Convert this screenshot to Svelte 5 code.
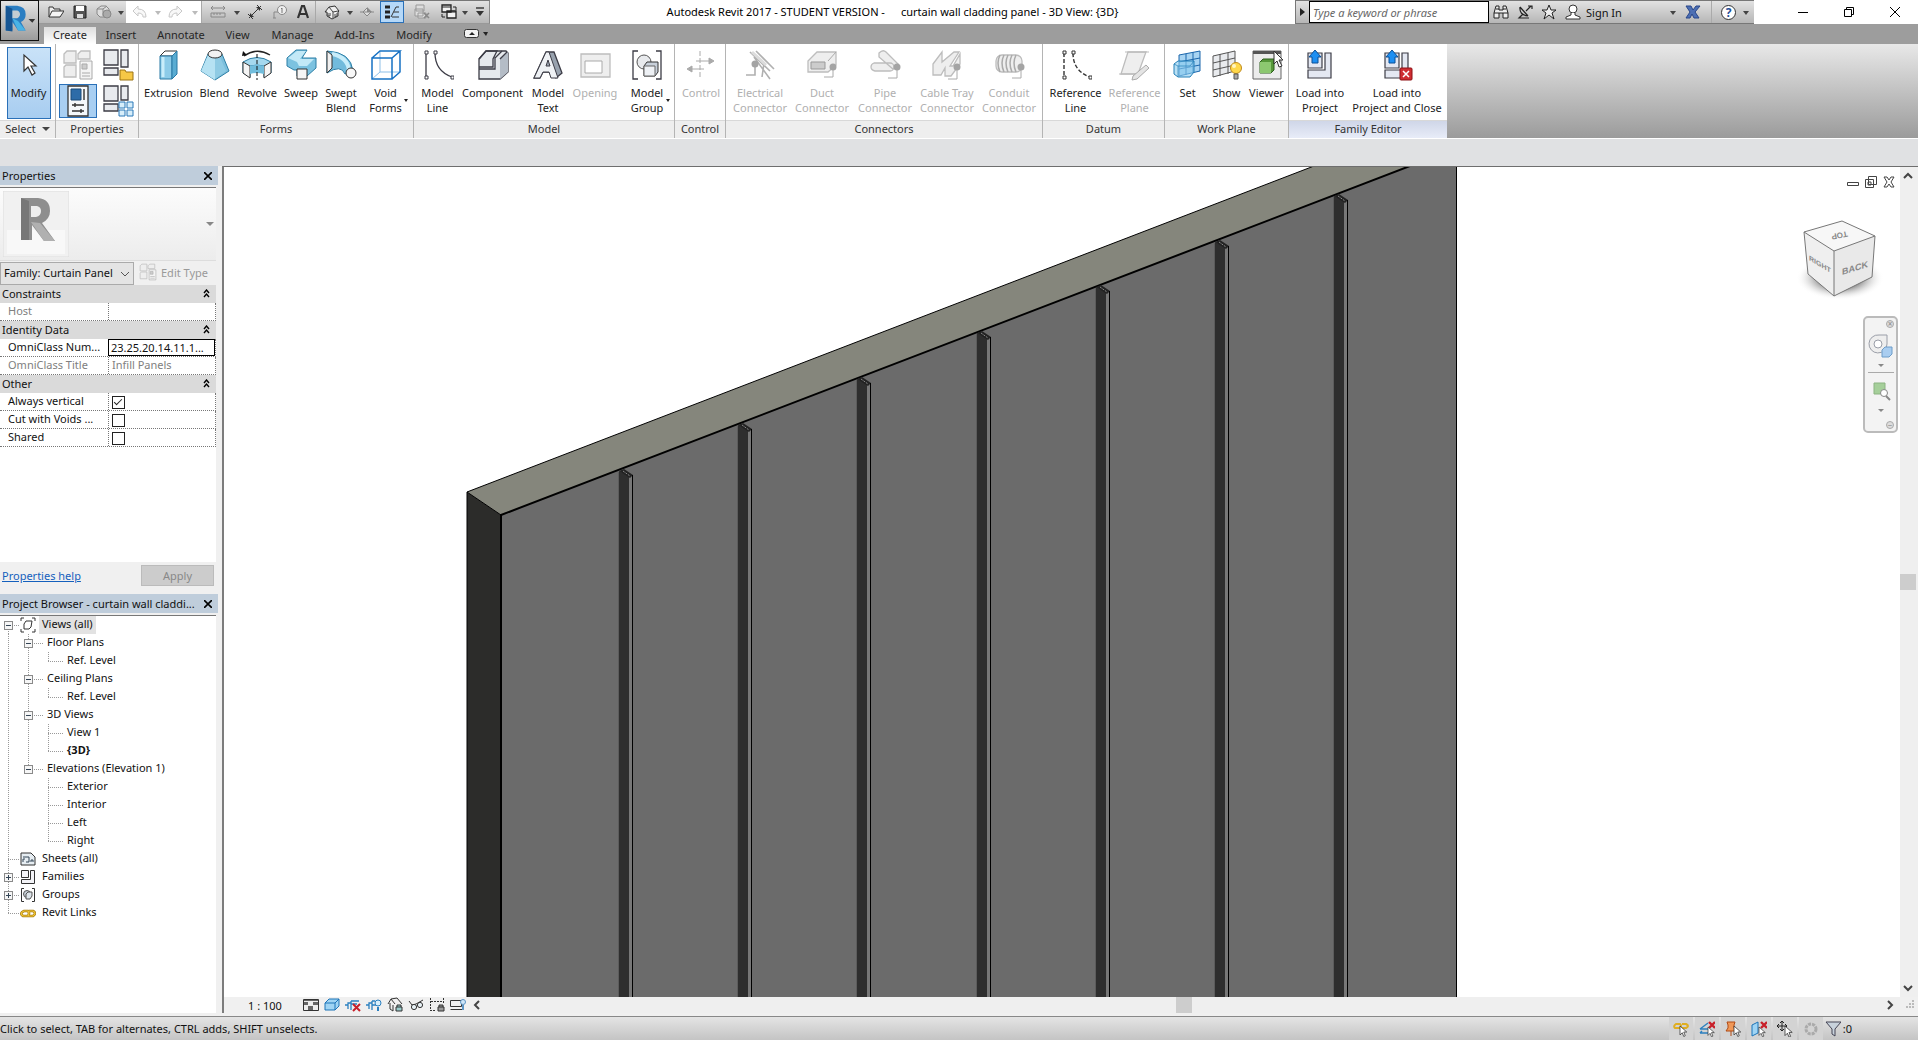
<script>
	/**
	 * Family editor window: quick access bar, ribbon, docked palettes,
	 * 3D view and status bar.
	 */
	const tabs = [
		{ label: 'Create', w: 52 },
		{ label: 'Insert', w: 50 },
		{ label: 'Annotate', w: 70 },
		{ label: 'View', w: 43 },
		{ label: 'Manage', w: 67 },
		{ label: 'Add-Ins', w: 57 },
		{ label: 'Modify', w: 62 }
	];

	const panels = [
		{
			title: 'Forms', w: 275,
			tools: [
				{ label: 'Extrusion', icon: 'extrusion', w: 52 },
				{ label: 'Blend', icon: 'blend', w: 40 },
				{ label: 'Revolve', icon: 'revolve', w: 45 },
				{ label: 'Sweep', icon: 'sweep', w: 43 },
				{ label: 'Swept\nBlend', icon: 'sweptBlend', w: 37 },
				{ label: 'Void\nForms', icon: 'voidForms', w: 52, menu: true }
			]
		},
		{
			title: 'Model', w: 261,
			tools: [
				{ label: 'Model\nLine', icon: 'modelLine', w: 43 },
				{ label: 'Component', icon: 'component', w: 67 },
				{ label: 'Model\nText', icon: 'modelText', w: 44 },
				{ label: 'Opening', icon: 'opening', w: 50, off: true },
				{ label: 'Model\nGroup', icon: 'modelGroup', w: 54, menu: true }
			]
		},
		{
			title: 'Control', w: 51,
			tools: [{ label: 'Control', icon: 'control', w: 48, off: true }]
		},
		{
			title: 'Connectors', w: 317,
			tools: [
				{ label: 'Electrical\nConnector', icon: 'electrical', w: 62, off: true },
				{ label: 'Duct\nConnector', icon: 'duct', w: 62, off: true },
				{ label: 'Pipe\nConnector', icon: 'pipe', w: 64, off: true },
				{ label: 'Cable Tray\nConnector', icon: 'cableTray', w: 60, off: true },
				{ label: 'Conduit\nConnector', icon: 'conduit', w: 64, off: true }
			]
		},
		{
			title: 'Datum', w: 122,
			tools: [
				{ label: 'Reference\nLine', icon: 'refLine', w: 60 },
				{ label: 'Reference\nPlane', icon: 'refPlane', w: 58, off: true }
			]
		},
		{
			title: 'Work Plane', w: 124,
			tools: [
				{ label: 'Set', icon: 'set', w: 38 },
				{ label: 'Show', icon: 'show', w: 40 },
				{ label: 'Viewer', icon: 'viewer', w: 40 }
			]
		},
		{
			title: 'Family Editor', w: 158, tinted: true,
			tools: [
				{ label: 'Load into\nProject', icon: 'load', w: 56 },
				{ label: 'Load into\nProject and Close', icon: 'loadClose', w: 98 }
			]
		}
	];

	const quick = [
		{ icon: 'open', name: 'Open', w: 24 },
		{ icon: 'save', name: 'Save', w: 24 },
		{ icon: 'sync', name: 'Synchronize', w: 24 },
		{ icon: 'caret', name: 'Synchronize options', w: 10 },
		{ icon: 'undo', name: 'Undo', w: 28, pale: true },
		{ icon: 'caretOff', name: 'Undo history', w: 8, pale: true },
		{ icon: 'redo', name: 'Redo', w: 26, pale: true },
		{ icon: 'caretOff', name: 'Redo history', w: 13, pale: true },
		{ icon: 'measure', name: 'Measure', w: 32, sep: true },
		{ icon: 'caret', name: 'Measure options', w: 8 },
		{ icon: 'aligned', name: 'Aligned dimension', w: 28 },
		{ icon: 'tag', name: 'Tag by category', w: 22 },
		{ icon: 'text', name: 'Text', w: 24 },
		{ icon: 'home', name: 'Default 3D view', w: 32, sep: true },
		{ icon: 'caret', name: '3D view options', w: 6 },
		{ icon: 'section', name: 'Section', w: 27 },
		{ icon: 'thin', name: 'Thin lines', w: 24, on: true },
		{ icon: 'closeHidden', name: 'Close hidden windows', w: 35 },
		{ icon: 'switch', name: 'Switch windows', w: 20 },
		{ icon: 'caret', name: 'Window list', w: 12 },
		{ icon: 'customize', name: 'Customize', w: 18 }
	];

	const tree = [
		{ label: 'Views (all)', depth: 0, box: '-', icon: 'views', selected: true },
		{ label: 'Floor Plans', depth: 1, box: '-' },
		{ label: 'Ref. Level', depth: 2, last: true },
		{ label: 'Ceiling Plans', depth: 1, box: '-' },
		{ label: 'Ref. Level', depth: 2, last: true },
		{ label: '3D Views', depth: 1, box: '-' },
		{ label: 'View 1', depth: 2 },
		{ label: '{3D}', depth: 2, last: true, bold: true },
		{ label: 'Elevations (Elevation 1)', depth: 1, box: '-', last: true },
		{ label: 'Exterior', depth: 2 },
		{ label: 'Interior', depth: 2 },
		{ label: 'Left', depth: 2 },
		{ label: 'Right', depth: 2, last: true },
		{ label: 'Sheets (all)', depth: 0, icon: 'sheets' },
		{ label: 'Families', depth: 0, box: '+', icon: 'families' },
		{ label: 'Groups', depth: 0, box: '+', icon: 'groups' },
		{ label: 'Revit Links', depth: 0, icon: 'links', last: true }
	];
	const lastBranch = tree.findIndex((n) => n.depth === 1 && n.last);

	// dotted connector lines left of a tree row
	function guides(node, i) {
		let d = `M8.5 ${i === 0 ? 9 : 0}V${i === tree.length - 1 ? 9 : 18}`;
		if (i > 0 && i <= lastBranch) d += `M28.5 0V${i === lastBranch ? 9 : 18}`;
		if (node.depth === 0) d += 'M8 9.5H20';
		if (node.depth === 1) d += 'M28 9.5H43';
		if (node.depth === 2) d += `M48.5 0V${node.last ? 9 : 18}M48 9.5H63`;
		return d;
	}

	const viewTools = ['detail', 'style', 'sunPath', 'shadows', 'crop', 'glasses', 'constraints', 'analytical'];
	const statusTools = ['selLinks', 'selUnderlay', 'selPinned', 'selFace', 'drag', 'gear'];

	const ribs = [0, 1, 2, 3, 4, 5, 6].map((n) => ({ x: Math.round(395 + n * 119.17), y: Math.round(304 - n * 45.9) }));

	const dark = 'stroke="#3c3c46" stroke-width="1.3"';
	const gray = 'fill="#eee" stroke="#bdbdbd" stroke-width="1.3"';
	const arrowCursor = '<path d="M0 0v12l3-3 2 5 2-1-2-5h4z" fill="#fff" stroke="#333"/>';
	const redX = '<path d="m10 1 6 6m0-6-6 6" stroke="#c8202a" stroke-width="2.4"/>';

	const big = {
		modify: '<path d="M11 6v16l4-4 4 8 3-2-4-7h5z" fill="#fff" stroke="#333" stroke-width="1.2"/>',
		extrusion: '<path d="m7 7 5-5h12l-5 5z" fill="#fff" stroke="#333"/><path d="M7 7h12v23H7z" fill="#8ccbe8" stroke="#2878a4"/><path d="m19 7 5-5v23l-5 5z" fill="#5aacd2" stroke="#2878a4"/><path d="M10 8v20" stroke="#c9edfa" stroke-width="3"/>',
		blend: '<path d="M9 5 2 22l14 9 14-9L23 5z" fill="#7dbfdc" stroke="#2d7fa6"/><path d="m9 6-7 16 14 9V9z" fill="#b6e2f3"/><path d="m16 9 5-1 6 14-11 8z" fill="#8fcbe4"/><ellipse cx="16" cy="5" rx="7" ry="4" fill="#f2f2f2" stroke="#333"/>',
		revolve: '<path d="M3 7Q16-2 29 6" fill="none" stroke="#222" stroke-width="1.4"/><path d="m1 7 1-5 4 4z" fill="#111"/><path d="M2 13q14-9 28 0v11l-7 4V17l-7-1-7 1v11l-7-4z" fill="#a5d8ee" stroke="#2d7fa6"/><path d="m2 13 7 4v12l-7-5zm28 0-7 4v12l7-5z" fill="#f5f5f5" stroke="#333"/><path d="M9 17q7-2 14 0v8q-7-2-14 0z" fill="#72bddc"/><path d="M16 5v26" stroke="#111" stroke-dasharray="4 2"/>',
		sweep: '<path d="m2 9 9-8h11l-5 8h14v10l-9 8H12v-6h-3l-7-4z" fill="#7cc2e0" stroke="#2d7fa6"/><path d="m3 9 9-7h9l-6 8h14l-7 7h-8L12 13z" fill="#c3e9f7"/><path d="M12 20h10v10H12z" fill="#f6f6f6" stroke="#333"/>',
		sweptBlend: '<path d="M2 2q24 1 26 20l-8 3Q16 15 2 24z" fill="#72bbdc" stroke="#2d7fa6"/><path d="M7 5q16 3 17 17" fill="none" stroke="#c8edfa" stroke-width="4"/><path d="M2 2v22l5-5V6z" fill="#f0f0f0" stroke="#333"/><circle cx="26" cy="24" r="5" fill="#f8f8f8" stroke="#333"/>',
		voidForms: '<path d="M10 2v21h20M10 23l-8 7" fill="none" stroke="#8dbfe8"/><path d="M2 9h20v21H2zm0 0 8-7h20l-8 7m8-7v21l-8 7" fill="none" stroke="#1671c4" stroke-width="1.5"/>',
		modelLine: `<g fill="#fff" ${dark}><path d="M4 4v24M13 4q0 18 17 24" fill="none"/><path d="M3 2h3v3H3zm0 25h3v3H3zm9-25h3v3h-3zm17 25h3v3h-3z" stroke-width="1"/></g>`,
		component: `<path d="m2 10 7-8h20l2 2v19l-8 7H2z" fill="#e6e9ed" ${dark}/><path d="m23 9 8-6v20l-8 7z" fill="#b4bcc6"/><path d="m2 10 7-8h11l-4 8v8H2m0 2h16V9l7-7M23 10l7-7" fill="none" ${dark}/>`,
		modelText: `<path d="m2 29 12-26h8l8 21-6 5-2-6H11l-3 6z" fill="#98a2ae" ${dark}/><path d="M2 29 14 3h3l9 26h-7l-2-6h-6l-3 6zm12-12h4l-2-6z" fill="#eef1f4" stroke="#3c3c46"/>`,
		opening: `<path d="M2 5h29v23H2z" ${gray}/><path d="M6 12h17v12H6z" fill="#fff" stroke="#aaa"/>`,
		modelGroup: `<path d="M7 2H2v28h5M25 2h5v28h-5" fill="none" ${dark}/><circle cx="13" cy="13" r="7" fill="#e8eaed" stroke="#555"/><path d="m13 17 3-4h11v10l-3 4H13z" fill="#c8d0da" stroke="#333"/><path d="M13 17h11v10H13z" fill="#eef1f5" stroke="#666"/>`,
		control: '<g stroke="#aaa" fill="#aaa"><path d="M15 2v28" stroke-dasharray="5 2"/><path d="M11 12h16M4 20h15" fill="none"/><path d="m24 9 5 3-5 3zM7 17l-5 3 5 3z"/></g>',
		electrical: '<path d="m6 3 20 19M12 2l18 18M10 8l16 22M20 14l-2 14M2 26h9V16" stroke="#b0b0b0" stroke-width="1.6" fill="none"/><circle cx="11" cy="15" r="3.5" fill="#a4a4a4"/><path d="m8 3 14 13" stroke="#dcdcdc" stroke-width="3"/>',
		duct: `<path d="m2 12 9-9h19v13l-8 7H2z" ${gray}/><path d="M5 13h14v7H5z" fill="#ccc" stroke="#999"/><path d="m22 12 8-9M18 28h9V19" fill="none" stroke="#aaa"/><circle cx="27" cy="18" r="3.5" fill="#a4a4a4"/>`,
		pipe: `<path d="M5 14h16a4 4 0 0 1 0 8H6q-4-1-4-4t3-4zM10 4q4-4 7-1l12 12-5 5L10 8z" ${gray}/><path d="M19 29h9V18" fill="none" stroke="#aaa"/><circle cx="28" cy="18" r="3.5" fill="#a4a4a4"/>`,
		cableTray: `<path d="m2 15 9-12v10L23 3h5l-9 14h3l7-12v10l-9 12h-6v-8l-4 7H2z" ${gray}/><path d="M17 30h9V18" fill="none" stroke="#aaa"/><circle cx="26" cy="18" r="3.5" fill="#a4a4a4"/>`,
		conduit: `<rect x="3" y="6" width="26" height="17" rx="6" ${gray}/><path d="M7 6q-4 8 0 17m4-17q-4 8 0 17m4-17q-4 8 0 17m4-17q-4 8 0 17m4-17q-4 8 0 17" fill="none" stroke="#aaa" stroke-width="1.5"/><path d="M19 29h9V18" fill="none" stroke="#aaa"/><circle cx="28" cy="18" r="3.5" fill="#a4a4a4"/>`,
		refLine: '<g fill="#fff" stroke="#333" stroke-width="1.4"><path d="M4 4v24M13 4q0 18 17 24" fill="none" stroke-dasharray="4 2"/><path d="M3 2h3v3H3zm0 25h3v3H3zm9-25h3v3h-3zm17 25h3v3h-3z" stroke-width="1"/></g>',
		refPlane: `<path d="M9 3h18l-8 22H2z" ${gray}/><path d="M6 3h24M0 25h22" stroke="#bbb"/><path d="m14 27 13-11 3 3-12 11-5 1z" fill="#e4e4e4" stroke="#aaa"/>`,
		set: '<path d="m7 6 21-4v20L7 27z" fill="#a8d4f2" stroke="#1b66ac"/><path d="M14 5v21m7-23v21M7 13l21-4M7 20l21-4" stroke="#1b66ac"/><path d="m2 15 4-3h16v11l-4 5H6l-4-3z" fill="#8acbee" fill-opacity=".6" stroke="#2580b8"/><path d="m2 15 4 2v11m0-11h12l4-5" fill="none" stroke="#2580b8" stroke-opacity=".7"/>',
		show: '<path d="m2 7 22-5v20L2 28z" fill="#e9ebee" stroke="#555"/><path d="M9 5v22m8-23v21M2 14l22-5M2 21l22-5" stroke="#555"/><circle cx="25" cy="19" r="5.5" fill="#ffd84a" stroke="#c08a1c"/><path d="M23 25h4v5h-4z" fill="#aaa" stroke="#555"/><circle cx="23" cy="17" r="2" fill="#fff6c4"/>',
		viewer: '<path d="M2 2h28v28H2z" fill="#ececec" stroke="#666"/><path d="M2 2h28v3H2z" fill="#555"/><path d="m9 13 3-3h11v11l-3 3H9z" fill="#56983a" stroke="#2c5f1c"/><path d="M9 13h11v11H9z" fill="#8cc870"/><path d="M23 2v13l3-3 2 6 3-1-3-6h4z" fill="#fff" stroke="#333"/>',
		load: '<path d="M4 4h14v15H4zm17 0h6v25H4v-8h17z" fill="#e4e8f2" stroke="#3c3c46" stroke-width="1.2"/><path d="m11 1 6 7h-3v6H8V8H5z" fill="#1d8ff2" stroke="#0b4f96"/>',
		loadClose: '<path d="M4 4h14v15H4zm17 0h6v25H4v-8h17z" fill="#e4e8f2" stroke="#3c3c46" stroke-width="1.2"/><path d="m11 1 6 7h-3v6H8V8H5z" fill="#1d8ff2" stroke="#0b4f96"/><rect x="19" y="19" width="12" height="12" rx="1" fill="#cf2d32" stroke="#8d1014"/><path d="m22 22 6 6m0-6-6 6" stroke="#fff" stroke-width="1.5"/>',
		typeProps: `<path d="M2 5 5 2h9v12H2zm14 0 3-3h9v8H16zM2 18l2-2h10v12H2z" ${gray}/><path d="M18 12h12v18H18z" fill="#f4f4f4" stroke="#aaa"/><path d="M20 15h5v5h-5zm0 9h8m-8 3h8" fill="#ccc" stroke="#aaa"/>`,
		properties: '<path d="M6 1h20v30H6z" fill="#f4f7fa" stroke="#333" stroke-width="1.3"/><path d="M9 4h10v11H9z" fill="#2d6ca8" stroke="#1b4a78"/><path d="M22 4v11M10 20h12M10 26h12m-9-8v4m6 2v4" stroke="#333" stroke-width="1.4"/>',
		familyCat: `<path d="M2 1h14v15H2zm17 0h7v17h-7zM2 19h14v7H2z" fill="#e8eaee" ${dark}/><path d="M18 21h5l1 2h7v8H18z" fill="#f6c846" stroke="#9c7414"/>`,
		familyTypes: `<path d="M2 1h14v15H2zm17 0h7v14h-7zM2 19h14v7H2z" fill="#e8eaee" ${dark}/><path d="M17 17h6v6h-6zm8 0h6v6h-6zm-8 8h6v6h-6zm8 0h6v6h-6z" fill="#d8eefa" stroke="#2a78b8"/>`
	};

	const small = {
		caret: '<path d="M5 7h6l-3 4z" fill="#444"/>',
		caretOff: '<path d="M5 7h6l-3 4z" fill="#bbb"/>',
		open: '<path d="M1 13V3h4l1 2h6v2" fill="#eee" stroke="#333"/><path d="m1 13 3-6h12l-4 6z" fill="#f5f5f5" stroke="#333"/>',
		save: '<path d="M2 2h12v12H2z" fill="#555" stroke="#222"/><path d="M4 2h8v5H4z" fill="#fff"/><path d="M5 10h6v4H5z" fill="#ddd"/>',
		sync: '<path d="m1 5 4-3h5l3 3v4l-4 4H4l-3-3zm0 0h6v7m0-7 4-3" fill="#ddd" stroke="#888"/><circle cx="11" cy="10" r="4" fill="#aaa" stroke="#888"/>',
		undo: '<path d="m1 7 5-5v3q8 0 8 8h-3q0-4-5-4v3z" fill="#f8f8f8" stroke="#c8c8c8"/>',
		redo: '<path d="m15 7-5-5v3q-8 0-8 8h3q0-4 5-4v3z" fill="#f8f8f8" stroke="#c8c8c8"/>',
		measure: '<path d="M1 4h14M3 2 1 4l2 2m10-4 2 2-2 2M1 9h14v4H1zm3 0v2m3-2v2m3-2v2" fill="none" stroke="#888"/>',
		aligned: '<path d="m2 14 12-12M1 10l5 5M10 1l5 5" stroke="#333"/><path d="M3 13V9l4 4zM13 3v4L9 3z" fill="#333"/>',
		tag: '<path d="M2 14V8h4M1 14h3" stroke="#888" fill="none"/><circle cx="10" cy="6" r="4.5" fill="#eee" stroke="#888"/><path d="m9 5 1-1v5" stroke="#777" fill="none"/>',
		text: '<path d="M3 14 7 2h2l4 12M5 10h6" stroke="#333" stroke-width="2.2" fill="none"/>',
		home: '<path d="m1 8 4-5 6-1 4 5-1 1v4l-6 3-5-3V8z" fill="#eee" stroke="#333"/><path d="m5 3 4 5 5-1M9 8v6M4 9v3h2V9m5 1v3l2-1v-3" fill="none" stroke="#444"/>',
		section: '<path d="M1 8h14M4 8l4-4 4 4-4 4z" fill="#ddd" stroke="#888"/><path d="m8 3 5 5H8z" fill="#888"/>',
		thin: '<path d="M1 3h5M1 8h5M1 13h5" stroke="#222" stroke-width="3"/><path d="M15 3h-3L7 13M15 8h-5m5 5H8" stroke="#333" fill="none"/>',
		closeHidden: '<path d="M2 1h8v6H2zm-1 4h8v7H1zm3 4h8v5H4z" fill="#ddd" stroke="#999"/><path d="m10 9 5 5m0-5-5 5" stroke="#888" stroke-width="1.6"/>',
		switch: '<path d="M1 1h9v7H1zm5 6h9v7H6z" fill="#f2f2f2" stroke="#222" stroke-width="1.3"/><path d="M6 8h9M1 3h9M12 3h3v3M4 13H1v-3" stroke="#222" fill="none"/>',
		customize: '<path d="M4 4h8" stroke="#333" stroke-width="1.4"/><path d="M4 7h8l-4 5z" fill="#333"/>',
		binoculars: '<path d="M3 2h3v4h4V2h3l2 7v5h-5V9H6v5H1V9zM1 9h5m4 0h5M3 5h3m4 0h3" fill="#eee" stroke="#222"/>',
		dish: '<path d="M3 3q-1 8 8 9M3 3l8 9M6 10l-4 4h10M9 7l5-5m-3 0h4v3" stroke="#222" fill="none" stroke-width="1.2"/>',
		star: '<path d="m8 1 2 5h5l-4 3 2 6-5-4-5 4 2-6-4-3h5z" fill="#eee" stroke="#222"/>',
		person: '<circle cx="8" cy="5" r="4" fill="#fff" stroke="#333"/><path d="M6 9v2l-5 2v2h14v-2l-5-2V9" fill="#fff" stroke="#333"/>',
		exchange: '<path d="M1 2h5l2 4 3-4h4l-5 6 4 6H9l-2-4-2 4H1l4-6z" fill="#4d6fb4" stroke="#28468a"/>',
		views: '<path d="M4 1H1v3m0 8v3h3m8-14h3v3m0 8v3h-3M4 7l2-3h6l-1 6-2 2H4z" fill="none" stroke="#333"/>',
		sheets: '<path d="M1 2h10l4 4v8H1z" fill="#e6edf2" stroke="#333"/><path d="M3 6h6v5H6m-3 0V8h2m6 3V9h2v2" fill="none" stroke="#345"/>',
		families: '<path d="M1.5 1.5h7v7h-7zm0 9h9v-9h4v13h-13z" fill="#f4f4f8" stroke="#333"/>',
		groups: '<path d="M4 1.5H1.5v13H4m8-13h2.5v13H12" fill="none" stroke="#333"/><circle cx="7" cy="7" r="3.5" fill="#c8d0d8" stroke="#555"/><path d="m6 7 2-2h4v4l-2 3H6z" fill="#dde4ea" stroke="#555"/>',
		links: '<path d="M4 6h4q2 2 0 5H3Q-1 8 4 6zm5 0h4q4 2 0 5H8" fill="none" stroke="#a87c10" stroke-width="2.6"/><path d="M4 6h4q2 2 0 5H3Q-1 8 4 6zm5 0h4q4 2 0 5H8" fill="none" stroke="#f2c838" stroke-width="1.2"/>',
		detail: '<path d="M.5 2.5h15v11H.5z" fill="#eee" stroke="#333"/><path d="M1 5h4v3H1zm9 0h5v3h-5zM5 9h5v4H5zM1 3h14v1H1z" fill="#666"/>',
		style: '<path d="m1 6 4-4h10v7l-4 4H1z" fill="#9fd4f4" stroke="#1d74b8"/><path d="M1 6h10v7m0-7 4-4" fill="none" stroke="#1d74b8"/>',
		sunPath: '<path d="M0 8h3m0 4V6h3v7m0-9h8M6 4v3h6" fill="none" stroke="#2b80c0" stroke-width="1.3"/><path d="m8 7 7 7m0-7-7 7" stroke="#c8202a" stroke-width="2"/>',
		shadows: '<path d="M0 8h3m0 4V6h3v7m0-9h3M6 4v4h4" fill="none" stroke="#2b80c0" stroke-width="1.3"/><circle cx="12" cy="6" r="3" fill="#d9effb" stroke="#2b80c0"/><path d="M11 10h2v4h-2z" fill="#2b80c0"/>',
		crop: '<path d="m1 7 3-5 6-1 5 6M3 6v6l3 2m-2-12 4 5M6 8v6" fill="none" stroke="#333"/><path d="M9 10h6v4H9zm1 0V8h4v2" fill="#9cc" stroke="#333"/>',
		glasses: '<path d="m1 4 3 4 4-1 7-4" fill="none" stroke="#333"/><circle cx="6" cy="10" r="2.6" fill="#e8f2f6" stroke="#333"/><circle cx="12" cy="8" r="2.6" fill="#e8f2f6" stroke="#333"/>',
		constraints: '<path d="M1.5 1v13M14.5 1v6M2 4.5h12M1 13.5h6" stroke="#333" stroke-dasharray="2 1"/><path d="M9 10h6v4H9zm1 0V8h4v2" fill="#999" stroke="#333"/>',
		analytical: '<path d="M.5 3.5h11v6H.5zm0 9H13" fill="#eee" stroke="#333"/><circle cx="13" cy="5" r="2.5" fill="#cfe6f8" stroke="#5c94c4"/><path d="M13 8v5" stroke="#5c94c4" stroke-width="2"/>',
		selLinks: `<path d="M3 3h4q2 2 0 4H2Q0 5 3 3zm6 0h4q4 2 0 4H8" fill="none" stroke="#e0ae20" stroke-width="2"/><g transform="translate(7 5) scale(.75)">${arrowCursor}</g>`,
		selUnderlay: `<path d="m1 8 8-6M1 8h8M1 12l2-2m-2 2h8" stroke="#2b80c0" stroke-width="1.4" fill="none"/>${redX}<g transform="translate(9 6) scale(.7)">${arrowCursor}</g>`,
		selPinned: `<path d="M2 1h8l-1 3v3l2 3H1l2-3V4zM6 10v5" fill="#f09858" stroke="#b04a14"/><g transform="translate(9 5) scale(.75)">${arrowCursor}</g>`,
		selFace: `<path d="m1 4 6-3v11l-6 3z" fill="#9fd4f4" stroke="#1d74b8"/>${redX}<g transform="translate(8 6) scale(.7)">${arrowCursor}</g>`,
		drag: `<path d="M5 0v10M0 5h10M3 2l2-2 2 2M3 8l2 2 2-2M2 3 0 5l2 2m6-4 2 2-2 2" stroke="#222" fill="none"/><g transform="translate(8 5) scale(.8)">${arrowCursor}</g>`,
		gear: '<circle cx="8" cy="8" r="5" fill="none" stroke="#aaa" stroke-width="3" stroke-dasharray="3 1"/>',
		filter: '<path d="M1 1h15l-6 7v7l-3-2V8z" fill="#c8d2dc" stroke="#445"/>'
	};
</script>

{#snippet glyph(body, size)}
	<svg class={size === 32 ? 'icon-lg' : 'icon-sm'} viewBox="0 0 {size} {size}" aria-hidden="true">{@html body}</svg>
{/snippet}

{#snippet tool(t)}
	<button class="tool" class:off={t.off} style="width: {t.w}px">
		{@render glyph(big[t.icon], 32)}
		<span class="tool-label">{t.label}</span>
		{#if t.menu}<i class="tool-caret"></i>{/if}
	</button>
{/snippet}

{#snippet groupHead(label)}
	<h3 class="group-head">
		{label}
		<svg viewBox="0 0 7 9" aria-hidden="true"><path d="m1 4 2.5-3L6 4M1 8l2.5-3L6 8" fill="none" stroke="#000" stroke-width="1.4" /></svg>
	</h3>
{/snippet}

{#snippet closeButton(name)}
	<button class="close" aria-label={name}>
		<svg viewBox="0 0 8 8" aria-hidden="true"><path d="m0 0 8 8M8 0 0 8" stroke="#000" stroke-width="1.6" /></svg>
	</button>
{/snippet}

<div class="app">
	<header class="titlebar">
		<button class="app-button" aria-label="Application menu">
			<svg viewBox="0 0 39 41" aria-hidden="true">
				<path d="M5 5h12q9 1 9 9 0 6-5 8l5 9h-8l-6-9v9H5z" fill="#2b7ec2" />
				<path d="m5 5 7 3v24l-7-1z" fill="#175694" />
				<path d="M12 10h5q3 1 3 4 0 3-3 4h-5z" fill="#c4ccd2" />
				<path d="m12 18 6 3 8 10h-8z" fill="#48b3e6" />
				<path d="M29 19h7l-3 4z" fill="#333" />
			</svg>
		</button>
		<div class="quick">
			{#each quick as q}
				<button class="q" class:pale={q.pale} class:on={q.on} class:sep={q.sep} style="width: {q.w}px" aria-label={q.name}>
					{@render glyph(small[q.icon], 16)}
				</button>
			{/each}
		</div>
		<div class="title">
			<span>Autodesk Revit 2017 - STUDENT VERSION -</span>
			<span>curtain wall cladding panel - 3D View: {'{3D}'}</span>
		</div>
		<div class="infocenter">
			<button class="expand" aria-label="Collapse search">
				<svg viewBox="0 0 6 8" width="6" height="8" aria-hidden="true"><path d="M0 0v8l5-4z" fill="#222" /></svg>
			</button>
			<input type="text" placeholder="Type a keyword or phrase" aria-label="Search" />
			<button class="info" aria-label="Search help">{@render glyph(small.binoculars, 16)}</button>
			<button class="info" aria-label="Communication center">{@render glyph(small.dish, 16)}</button>
			<button class="info" aria-label="Favorites">{@render glyph(small.star, 16)}</button>
			<button class="signin">{@render glyph(small.person, 16)}<span>Sign In</span>{@render glyph(small.caret, 16)}</button>
			<button class="info" aria-label="Exchange apps">{@render glyph(small.exchange, 16)}</button>
			<button class="help" aria-label="Help"><b>?</b>{@render glyph(small.caret, 16)}</button>
		</div>
		<div class="window-controls">
			<button aria-label="Minimize"><svg viewBox="0 0 10 10" aria-hidden="true"><path d="M0 5.5h10" /></svg></button>
			<button aria-label="Restore"><svg viewBox="0 0 10 10" aria-hidden="true"><path d="M.5 2.5h7v7h-7zM2.5 2V.5h7v7H8" /></svg></button>
			<button aria-label="Close"><svg viewBox="0 0 10 10" aria-hidden="true"><path d="m0 0 10 10M10 0 0 10" /></svg></button>
		</div>
	</header>

	<nav class="tabs">
		{#each tabs as tab, i}
			<button class="tab" class:active={i === 0} style="width: {tab.w}px">{tab.label}</button>
		{/each}
		<button class="ribbon-toggle" aria-label="Minimize ribbon">
			<svg viewBox="0 0 24 10" aria-hidden="true">
				<rect x=".5" y=".5" width="14" height="8" rx="2" fill="#f4f4f4" stroke="#333" />
				<path d="m5 6 3-3 3 3zM19 3h5l-2 4z" fill="#222" />
			</svg>
		</button>
	</nav>

	<section class="ribbon">
		<div class="panel panel-select">
			<div class="tools">
				<button class="tool modify">{@render glyph(big.modify, 32)}<span class="tool-label">Modify</span></button>
			</div>
			<button class="panel-title">Select <i class="caret-down"></i></button>
		</div>
		<div class="panel panel-props">
			<div class="prop-tools">
				<button aria-label="Type properties">{@render glyph(big.typeProps, 32)}</button>
				<button aria-label="Family category">{@render glyph(big.familyCat, 32)}</button>
				<button class="on" aria-label="Properties">{@render glyph(big.properties, 32)}</button>
				<button aria-label="Family types">{@render glyph(big.familyTypes, 32)}</button>
			</div>
			<div class="panel-title">Properties</div>
		</div>
		{#each panels as p}
			<div class="panel" style="width: {p.w}px">
				<div class="tools">
					{#each p.tools as t}{@render tool(t)}{/each}
				</div>
				<div class="panel-title" class:tinted={p.tinted}>{p.title}</div>
			</div>
		{/each}
	</section>
	<div class="options-bar"></div>

	<main class="workspace">
		<aside class="dock">
			<section class="properties">
				<h2 class="palette-head"><span>Properties</span>{@render closeButton('Close properties')}</h2>
				<button class="type-selector" aria-label="Type selector">
					<svg class="thumb" viewBox="0 0 66 66" aria-hidden="true">
						<path d="M0 0h66v66H0z" fill="#f1f1f1" stroke="#ddd" />
						<path d="M4 39h58v24H4z" fill="#f8f8f8" />
						<path d="M18 7h17q12 1 12 13 0 8-8 12l13 18H41L29 34v15H18z" fill="#8e8e8e" />
						<path d="m18 7 8 3v39h-8z" fill="#777" />
						<path d="M28 15h6q4 1 4 5 0 5-5 6h-5z" fill="#eee" />
						<path d="m28 31 9 1 15 18H41z" fill="#b0b0b0" />
					</svg>
					<i class="caret-down"></i>
				</button>
				<div class="family-row">
					<span class="combo">
						<select aria-label="Family"><option>Family: Curtain Panel</option></select>
						<svg viewBox="0 0 8 6" aria-hidden="true"><path d="m0 1 4 4 4-4" fill="none" stroke="#555" /></svg>
					</span>
					<button class="edit-type" disabled>{@render glyph(big.typeProps, 32)}Edit Type</button>
				</div>
				{@render groupHead('Constraints')}
				<div class="row muted"><span>Host</span><span></span></div>
				{@render groupHead('Identity Data')}
				<div class="row"><label for="omni">OmniClass Num...</label><input id="omni" type="text" value="23.25.20.14.11.1..." /></div>
				<div class="row muted"><span>OmniClass Title</span><span>Infill Panels</span></div>
				{@render groupHead('Other')}
				<div class="row"><label for="vertical">Always vertical</label><span><input id="vertical" type="checkbox" checked /></span></div>
				<div class="row"><label for="voids">Cut with Voids ...</label><span><input id="voids" type="checkbox" /></span></div>
				<div class="row"><label for="shared">Shared</label><span><input id="shared" type="checkbox" /></span></div>
				<div class="filler"></div>
				<footer class="prop-footer">
					<a href="#help">Properties help</a>
					<button disabled>Apply</button>
				</footer>
			</section>

			<section class="browser">
				<h2 class="palette-head"><span>Project Browser - curtain wall claddi...</span>{@render closeButton('Close browser')}</h2>
				<ul class="tree">
					{#each tree as node, i}
						<li class="d{node.depth}">
							<svg class="guides" viewBox="0 0 64 18" aria-hidden="true">
								<path d={guides(node, i)} fill="none" stroke="#999" stroke-dasharray="1 1" />
								{#if node.box}
									<g transform="translate({node.depth * 20} 0)">
										<rect x="4.5" y="5.5" width="8" height="8" fill="#f6f6f6" stroke="#8a8a8a" />
										<path d={node.box === '+' ? 'M6 9.5h5M8.5 7v5' : 'M6 9.5h5'} stroke="#345" />
									</g>
								{/if}
							</svg>
							{#if node.icon}{@render glyph(small[node.icon], 16)}{/if}
							<span class:selected={node.selected} class:bold={node.bold}>{node.label}</span>
						</li>
					{/each}
				</ul>
			</section>
		</aside>

		<section class="view">
			<div class="view-main">
				<div class="canvas">
					<svg class="scene" role="img" aria-label="Cladding panel in 3D">
						<path d="M243 325 1103 -6 1199 -6 277 348z" fill="#85867c" />
						<path d="M243 325 277 348V3000H243z" fill="#2c2c2a" />
						<path d="M277 348 1199 -6H1232V3000H277z" fill="#6b6b6b" />
						<path d="M243 3000V325L1103 -6M243 325 277 348" class="edge" />
						<path d="M277 3000V348L1199 -6" class="edge heavy" />
						<path d="M1232.5 -6V3000" class="edge" />
						{#each ribs as r}
							<g transform="translate({r.x} {r.y})">
								<path d="M-1 1 13 5V3000H-1z" fill="#5c5c5c" />
								<path d="M0 0 10 5V3000H0z" fill="#2e2e2e" />
								<path d="M10 4h3V3000h-3z" fill="#777" />
								<path d="m0 0 5-2 9 6-3 3z" fill="#222" />
								<path d="m4 0 7 5" stroke="#888" stroke-dasharray="2 1" />
								<path d="M13.5 4V3000" stroke="#000" />
							</g>
						{/each}
					</svg>
					<div class="doc-controls">
						<button aria-label="Minimize view"><svg viewBox="0 0 12 12" aria-hidden="true"><path d="M.5 6.5h11v3H.5z" /></svg></button>
						<button aria-label="Restore view"><svg viewBox="0 0 12 12" aria-hidden="true"><path d="M3.5.5h8v8h-8zM.5 3.5h8v8h-8zM3 6h3v3H3z" /></svg></button>
						<button aria-label="Close view"><svg viewBox="0 0 12 12" aria-hidden="true"><path d="M1 1h3l2 3 2-3h3L8 6l3 5H8L6 8l-2 3H1l3-5z" /></svg></button>
					</div>
					<svg class="viewcube" viewBox="0 0 100 100" role="img" aria-label="View cube">
						<defs>
							<radialGradient id="cube-shadow"><stop offset="0.5" stop-color="#999" /><stop offset="1" stop-color="#fff" stop-opacity="0" /></radialGradient>
						</defs>
						<ellipse cx="50" cy="68" rx="44" ry="22" fill="url(#cube-shadow)" />
						<path d="m14 22 38-11 33 15-41 15z" fill="#f7f7f7" />
						<path d="m14 22 30 19v45L18 64z" fill="#efefef" />
						<path d="M44 41 85 26l-3 41-38 19z" fill="#e9e9e9" />
						<path d="m14 22 38-11 33 15-41 15zm0 0 4 42 26 22V41m0 45 38-19 3-41" fill="none" stroke="#777" />
						<text transform="translate(57 21) rotate(168)">TOP</text>
						<text class="side" transform="translate(19 50) skewY(31)">RIGHT</text>
						<text class="wide" transform="translate(52 65) skewY(-17)">BACK</text>
					</svg>
					<div class="navbar">
						<button class="dot" aria-label="Close navigation bar">×</button>
						<button aria-label="Steering wheel">
							<svg viewBox="0 0 26 26" aria-hidden="true">
								<path d="M11 2h8v9a9 9 0 1 1-8-9z" fill="#eee" stroke="#9a9ea8" />
								<circle cx="10" cy="11" r="4" fill="#fff" stroke="#9a9ea8" />
								<path d="m14 17 3-3h7v7l-3 3h-7z" fill="#a9cdf0" stroke="#6c9cc8" />
							</svg>
						</button>
						<i class="caret-down"></i>
						<hr />
						<button aria-label="Zoom region">
							<svg viewBox="0 0 26 26" aria-hidden="true">
								<path d="M6 5h11v11H6z" fill="#a5cf9a" stroke="#8bb381" />
								<circle cx="16" cy="15" r="3.5" fill="#fff" stroke="#888" />
								<path d="m18 18 4 4" stroke="#888" stroke-width="2" />
							</svg>
						</button>
						<i class="caret-down"></i>
						<button class="dot" aria-label="Navigation bar options">−</button>
					</div>
				</div>
				<div class="scroll-v">
					<svg viewBox="0 0 10 10" aria-hidden="true"><path d="m1 7 4-4 4 4" /></svg>
					<i class="thumb-box"></i>
					<svg viewBox="0 0 10 10" aria-hidden="true"><path d="m1 3 4 4 4-4" /></svg>
				</div>
			</div>
			<div class="view-bar">
				<button class="scale">1 : 100</button>
				{#each viewTools as name}
					<button class="vt" aria-label={name}>{@render glyph(small[name], 16)}</button>
				{/each}
				<div class="scroll-h">
					<svg viewBox="0 0 10 10" aria-hidden="true"><path d="M7 1 3 5l4 4" /></svg>
					<i class="thumb-box"></i>
					<svg viewBox="0 0 10 10" aria-hidden="true"><path d="m3 1 4 4-4 4" /></svg>
				</div>
				<svg class="grip" viewBox="0 0 10 10" aria-hidden="true"><path d="M8 1h2M5 4h2m1 0h2M2 7h2m1 0h2m1 0h2" stroke="#bbb" stroke-width="2" /></svg>
			</div>
		</section>
	</main>

	<footer class="status">
		<span class="hint">Click to select, TAB for alternates, CTRL adds, SHIFT unselects.</span>
		{#each statusTools as name}
			<button class="st" aria-label={name}>{@render glyph(small[name], 16)}</button>
		{/each}
		<button class="filter" aria-label="Filter">{@render glyph(small.filter, 16)}<span>:0</span></button>
	</footer>
</div>

<style>
	:global(body) {
		margin: 0;
		background: #e0e1e3;
	}

	.app {
		position: relative;
		display: flex;
		flex-direction: column;
		height: 100vh;
		font-family: 'Noto Sans', 'Open Sans', sans-serif;
		font-size: 11px;
		line-height: 15px;
		color: #111;
		overflow: hidden;
	}

	button,
	input,
	select {
		font: inherit;
		color: inherit;
		margin: 0;
		padding: 0;
		border: 0;
		border-radius: 0;
		background: none;
		box-sizing: border-box;
	}

	svg {
		display: block;
		flex: none;
	}

	.icon-lg {
		width: 32px;
		height: 32px;
	}

	.icon-sm {
		width: 16px;
		height: 16px;
	}

	.caret-down {
		flex: none;
		width: 0;
		height: 0;
		border: 4px solid transparent;
		border-top-color: #444;
		border-bottom: 0;
	}

	/* Title bar */
	.titlebar {
		flex: none;
		display: flex;
		align-items: stretch;
		height: 24px;
		background: #fff;
	}

	.app-button {
		position: absolute;
		top: 0;
		left: 0;
		z-index: 2;
		width: 39px;
		height: 41px;
		border: 1px solid #111;
		background: linear-gradient(#e4e4e4, #9c9c9c);
	}

	.app-button svg {
		width: 37px;
		height: 39px;
	}

	.quick {
		display: flex;
		margin-left: 39px;
		padding-left: 5px;
		border-top: 1px solid #777;
		border-bottom: 1px solid #999;
		border-right: 1px solid #888;
		background: linear-gradient(#e2e2e2, #b6b6b6);
		box-sizing: border-box;
	}

	.q {
		display: flex;
		align-items: center;
		justify-content: center;
		overflow: hidden;
	}

	.q.pale {
		background: #fff;
	}

	.q.sep {
		border-left: 1px solid #a8a8a8;
	}

	.q.on {
		background: #b5d8f8;
		border: 1px solid #2a70b8;
	}

	.title {
		flex: 1;
		display: flex;
		align-items: center;
		justify-content: center;
		gap: 16px;
		padding-bottom: 1px;
		white-space: nowrap;
		color: #000;
	}

	.infocenter {
		display: flex;
		align-items: center;
		width: 459px;
		border: 1px solid #777;
		border-width: 1px 0 1px 1px;
		background: linear-gradient(#e2e2e2, #b6b6b6);
		box-sizing: border-box;
	}

	.expand {
		width: 13px;
		padding-left: 4px;
	}

	.infocenter input {
		width: 180px;
		height: 22px;
		padding: 0 3px;
		border: 1px solid #000;
		background: #fff;
		font-style: italic;
	}

	.infocenter input::placeholder {
		color: #666;
	}

	.info {
		display: flex;
		justify-content: center;
		width: 24px;
	}

	.signin {
		display: flex;
		align-items: center;
		gap: 5px;
		width: 120px;
		padding-left: 4px;
	}

	.signin span {
		flex: 1;
		text-align: left;
	}

	.help {
		display: flex;
		align-items: center;
		justify-content: flex-end;
		gap: 2px;
		flex: 1;
		height: 22px;
		margin-left: 6px;
		border-left: 1px solid #aaa;
	}

	.help b {
		width: 13px;
		height: 13px;
		border: 1px solid #333;
		border-radius: 50%;
		background: #fff;
		color: #1f4e96;
		font-size: 12px;
		line-height: 13px;
	}

	.window-controls {
		display: flex;
		align-items: center;
		justify-content: flex-end;
		width: 164px;
	}

	.window-controls button {
		display: flex;
		justify-content: center;
		width: 46px;
	}

	.window-controls svg {
		width: 10px;
		height: 10px;
		fill: none;
		stroke: #000;
		stroke-width: 1;
	}

	/* Tabs and ribbon */
	.tabs {
		flex: none;
		display: flex;
		align-items: flex-end;
		height: 20px;
		padding-left: 44px;
		background: #9d9d9d;
	}

	.tab {
		height: 17px;
		padding-bottom: 2px;
		color: #262626;
	}

	.tab.active {
		background: linear-gradient(#ddd, #fff);
	}

	.ribbon-toggle {
		align-self: center;
		margin-left: 19px;
	}

	.ribbon-toggle svg {
		width: 24px;
		height: 10px;
	}

	.ribbon {
		flex: none;
		display: flex;
		height: 94px;
		border-bottom: 1px solid #fff;
		background: linear-gradient(#e8e8e8, #9b9b9b);
	}

	.panel {
		display: flex;
		flex-direction: column;
		border-right: 1px solid #b4b4b4;
		background: #fff;
		box-sizing: border-box;
	}

	.panel:last-child {
		border-right: 0;
	}

	.panel-select {
		width: 56px;
	}

	.panel-props {
		width: 83px;
	}

	.tools {
		flex: 1;
		display: flex;
		justify-content: center;
		padding-left: 2px;
	}

	.tool {
		position: relative;
		flex: none;
		display: flex;
		flex-direction: column;
		align-items: center;
		gap: 4px;
		padding-top: 5px;
		color: #222;
	}

	.tool.off {
		color: #b0b0b0;
	}

	.tool-label {
		white-space: pre;
		text-align: center;
	}

	.tool-caret {
		position: absolute;
		right: 4px;
		top: 55px;
		border: 2px solid transparent;
		border-top: 3px solid #222;
		border-bottom: 0;
	}

	.tool.modify {
		width: 44px;
		height: 72px;
		margin-top: 3px;
		padding-top: 1px;
		border: 1px solid #2a70b8;
		background: linear-gradient(#c9e2f8, #a8cdf0);
	}

	.prop-tools {
		flex: 1;
		display: grid;
		grid-template-columns: 38px 38px;
		grid-template-rows: 34px 34px;
		gap: 2px;
		padding: 4px 3px 0;
	}

	.prop-tools button {
		display: flex;
		align-items: center;
		justify-content: center;
	}

	.prop-tools .on {
		border: 1px solid #2a70b8;
		background: #a9cff2;
	}

	.panel-title {
		display: flex;
		align-items: center;
		justify-content: center;
		gap: 6px;
		height: 18px;
		padding-bottom: 2px;
		border-top: 1px solid #d8d8d8;
		background: #eee;
		color: #333;
		box-sizing: border-box;
	}

	.panel-title.tinted {
		background: linear-gradient(#cfd6e8, #e8ecf8);
	}

	.options-bar {
		flex: none;
		height: 27px;
		background: #e0e1e3;
	}

	/* Docked palettes */
	.workspace {
		flex: 1;
		min-height: 0;
		display: flex;
		padding-bottom: 3px;
		background: #f0f0f0;
	}

	.dock {
		flex: none;
		display: flex;
		flex-direction: column;
		width: 218px;
	}

	.properties {
		display: flex;
		flex-direction: column;
		height: 428px;
		width: 216px;
	}

	.palette-head {
		display: flex;
		align-items: center;
		justify-content: space-between;
		width: 218px;
		height: 19px;
		margin: 0;
		padding: 0 6px 0 2px;
		background: #bfcddb;
		font-size: 11px;
		font-weight: 400;
		white-space: nowrap;
		box-sizing: border-box;
	}

	.close svg {
		width: 8px;
		height: 8px;
	}

	.type-selector {
		display: flex;
		align-items: center;
		justify-content: space-between;
		height: 74px;
		margin-top: 2px;
		padding: 0 2px 0 3px;
		border-top: 1px solid #777;
		border-bottom: 1px solid #ddd;
		background: linear-gradient(#fcfcfc, #ececec);
	}

	.type-selector .caret-down {
		border-top-color: #888;
	}

	.thumb {
		width: 66px;
		height: 66px;
	}

	.family-row {
		display: flex;
		align-items: center;
		height: 24px;
	}

	.combo {
		position: relative;
	}

	.combo select {
		appearance: none;
		display: block;
		width: 134px;
		height: 23px;
		padding: 0 0 2px 3px;
		border: 1px solid #aaa;
		background: #e4e4e4;
	}

	.combo svg {
		position: absolute;
		top: 9px;
		right: 5px;
		width: 8px;
		height: 6px;
		pointer-events: none;
	}

	.edit-type {
		display: flex;
		align-items: center;
		gap: 4px;
		padding: 0 0 2px 5px;
		color: #999;
	}

	.edit-type .icon-lg {
		width: 18px;
		height: 18px;
	}

	.group-head {
		display: flex;
		align-items: center;
		justify-content: space-between;
		height: 18px;
		margin: 0;
		padding: 0 6px 1px 2px;
		background: #dadada;
		font-size: 11px;
		font-weight: 400;
		box-sizing: border-box;
	}

	.group-head svg {
		width: 7px;
		height: 9px;
	}

	.row {
		display: grid;
		grid-template-columns: 108px 1fr;
		height: 18px;
		border-bottom: 1px dotted #777;
		border-right: 1px dotted #777;
		background: #fff;
		box-sizing: border-box;
	}

	.row > :first-child {
		padding-left: 8px;
		white-space: nowrap;
	}

	.row > :last-child {
		padding-left: 3px;
		border-left: 1px dotted #777;
	}

	.row > input:last-child {
		width: 100%;
		padding-left: 2px;
		border: 1px solid #000;
	}

	.muted {
		color: #808080;
	}

	input[type='checkbox'] {
		appearance: none;
		display: block;
		width: 13px;
		height: 13px;
		margin-top: 3px;
		border: 1px solid #222;
		background: #fff;
	}

	input[type='checkbox']:checked::after {
		content: '';
		display: block;
		width: 7px;
		height: 3px;
		margin: 2px 0 0 1px;
		border: solid #222;
		border-width: 0 0 1px 1px;
		transform: rotate(-45deg);
	}

	.filler {
		flex: 1;
		background: #fff;
	}

	.prop-footer {
		display: flex;
		align-items: center;
		justify-content: space-between;
		height: 26px;
		margin-bottom: 6px;
		padding: 0 2px;
	}

	.prop-footer a {
		color: #1460bd;
	}

	.prop-footer button {
		width: 73px;
		height: 21px;
		border: 1px solid #bbb;
		background: #ccc;
		color: #888;
	}

	.browser {
		flex: 1;
		min-height: 0;
		display: flex;
		flex-direction: column;
	}

	.tree {
		flex: 1;
		width: 216px;
		margin: 2px 0 0;
		padding: 0;
		border-top: 1px solid #777;
		background: #fff;
		list-style: none;
		box-sizing: border-box;
	}

	.tree li {
		display: flex;
		align-items: center;
		height: 18px;
		white-space: nowrap;
	}

	.guides {
		width: 64px;
		height: 18px;
	}

	.d0 .guides {
		margin-right: -44px;
	}

	.d1 .guides {
		margin-right: -20px;
	}

	.tree .icon-sm {
		margin-right: 3px;
	}

	.tree span {
		height: 18px;
		padding: 0 3px;
		line-height: 16px;
	}

	.tree .selected {
		background: #e2e2e2;
	}

	.tree .bold {
		font-weight: 700;
	}

	/* 3D view */
	.view {
		flex: 1;
		min-width: 0;
		display: flex;
		flex-direction: column;
		margin-left: 4px;
		border-top: 1px solid #6e6e6e;
		border-left: 2px solid #7c7c7c;
	}

	.view-main {
		flex: 1;
		min-height: 0;
		display: flex;
	}

	.canvas {
		position: relative;
		flex: 1;
		overflow: hidden;
		background: #fff;
	}

	.scene {
		width: 100%;
		height: 100%;
	}

	.edge {
		fill: none;
		stroke: #000;
	}

	.heavy {
		stroke-width: 2;
	}

	.doc-controls {
		position: absolute;
		top: 9px;
		right: 5px;
		display: flex;
		gap: 6px;
	}

	.doc-controls svg {
		width: 12px;
		height: 12px;
		fill: #fff;
		stroke: #444;
	}

	.viewcube {
		position: absolute;
		top: 43px;
		right: 10px;
		width: 100px;
		height: 100px;
	}

	.viewcube text {
		font-family: 'Liberation Sans', sans-serif;
		font-size: 8px;
		font-weight: 700;
		fill: #888;
	}

	.viewcube .side {
		font-size: 7px;
	}

	.viewcube .wide {
		font-size: 9px;
	}

	.navbar {
		position: absolute;
		top: 149px;
		right: 2px;
		display: flex;
		flex-direction: column;
		align-items: center;
		gap: 5px;
		width: 35px;
		height: 117px;
		padding: 2px;
		border: 2px solid #bbb;
		border-radius: 5px;
		background: #f3f3f3;
		box-sizing: border-box;
	}

	.navbar svg {
		width: 26px;
		height: 26px;
	}

	.navbar .caret-down {
		border-width: 3px 3px 0;
		border-top-color: #888;
	}

	.navbar hr {
		width: 26px;
		margin: 0;
		border: 0;
		border-top: 1px solid #aaa;
	}

	.navbar .dot {
		align-self: flex-end;
		width: 8px;
		height: 8px;
		border: 1px solid #aaa;
		border-radius: 50%;
		background: #ddd;
		color: #888;
		font-size: 8px;
		line-height: 6px;
	}

	.navbar .dot:last-child {
		margin-top: auto;
	}

	.scroll-v,
	.scroll-h {
		display: flex;
		align-items: center;
		justify-content: space-between;
		background: #efefef;
	}

	.scroll-v {
		flex-direction: column;
		width: 16px;
		padding: 4px 2px 4px 0;
	}

	.scroll-h {
		flex: 1;
		height: 16px;
		padding: 0 5px 0 4px;
	}

	.scroll-v svg,
	.scroll-h svg {
		width: 10px;
		height: 10px;
		fill: none;
		stroke: #444;
		stroke-width: 2;
	}

	.thumb-box {
		width: 16px;
		height: 16px;
		background: #cdcdcd;
	}

	.view-bar {
		flex: none;
		display: flex;
		align-items: center;
		height: 16px;
		background: #f0f0f0;
	}

	.scale {
		width: 76px;
		padding-left: 6px;
	}

	.vt {
		display: flex;
		justify-content: center;
		width: 21px;
	}

	.grip {
		width: 10px;
		height: 10px;
		margin: 0 4px;
	}

	/* Status bar */
	.status {
		flex: none;
		display: flex;
		align-items: center;
		gap: 2px;
		height: 24px;
		padding-right: 66px;
		border-top: 1px solid #888;
		background: linear-gradient(#e4e4e4, #c4c4c4);
		box-sizing: border-box;
	}

	.hint {
		flex: 1;
	}

	.st {
		display: flex;
		align-items: center;
		justify-content: center;
		width: 24px;
		height: 23px;
		background: #d3d3d3;
	}

	.filter {
		display: flex;
		align-items: center;
		gap: 2px;
	}
</style>
